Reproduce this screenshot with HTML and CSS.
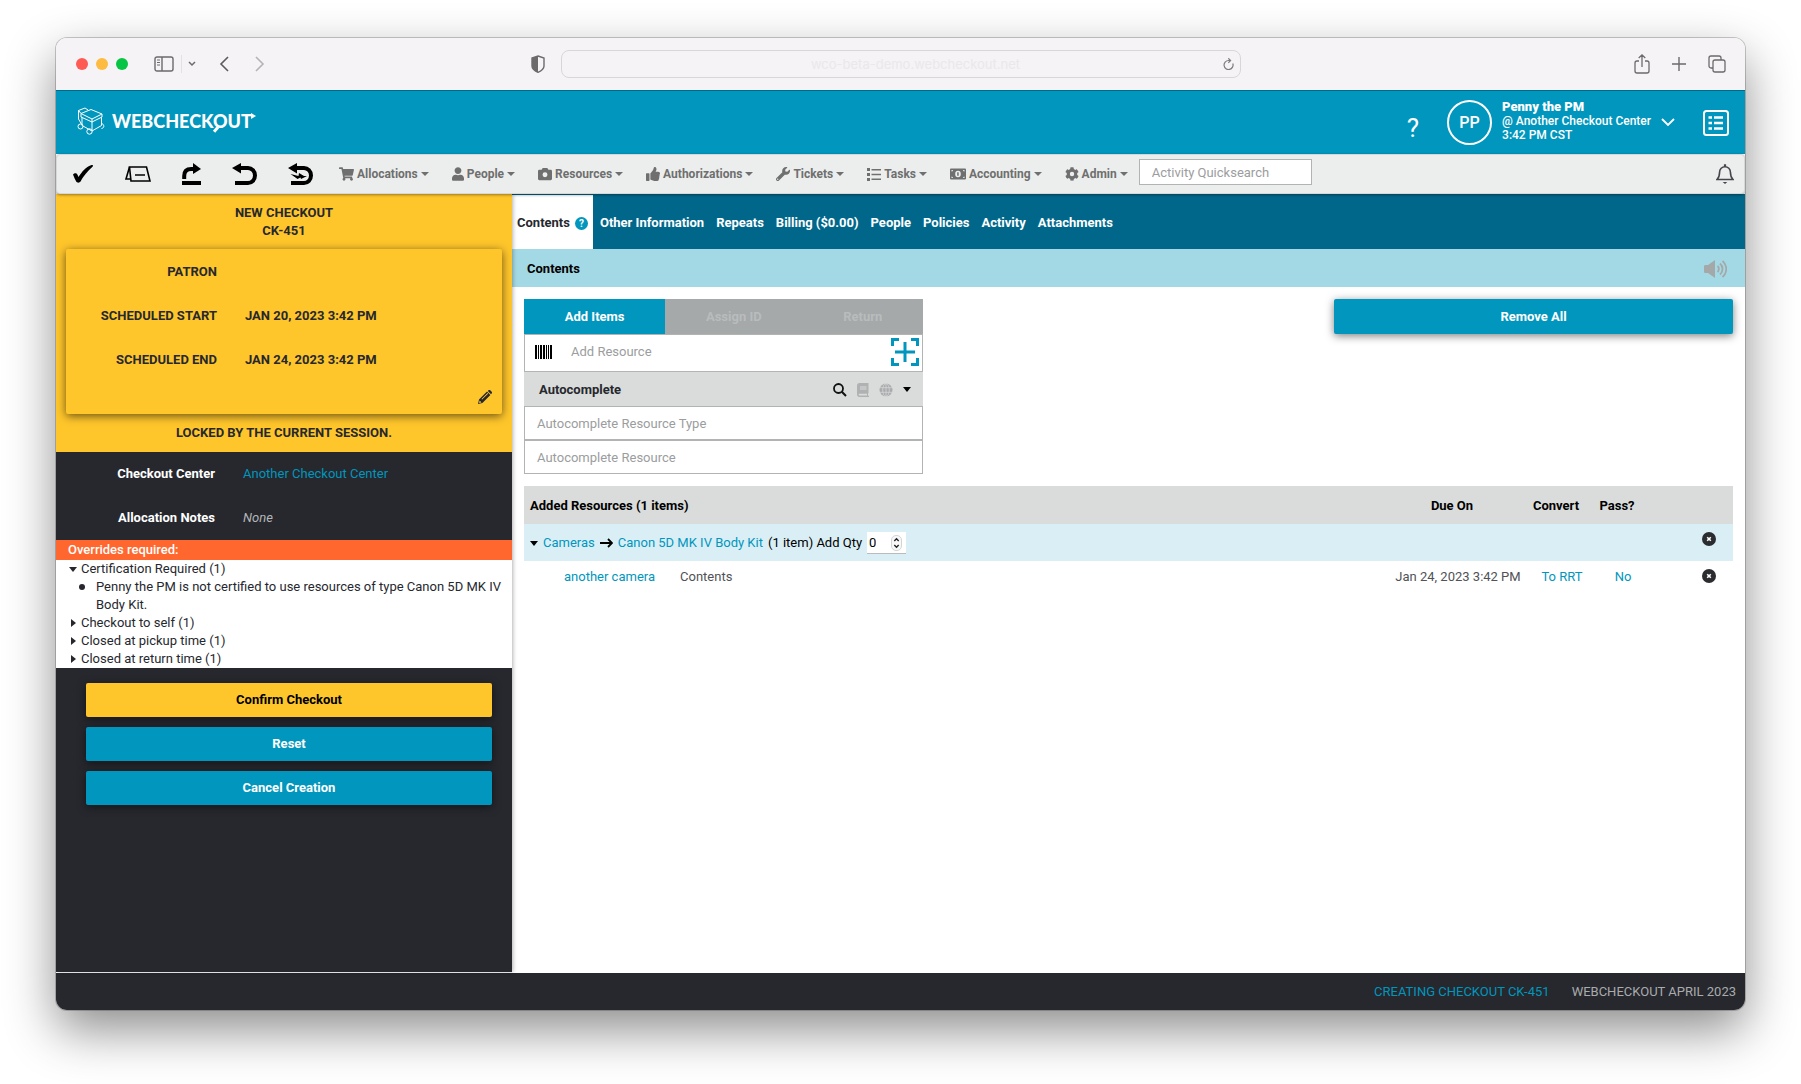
FILE: index.html
```html
<!DOCTYPE html>
<html lang="en">
<head>
    <meta charset="UTF-8">
    <meta name="viewport" content="width=device-width, initial-scale=1.0">
    <title>WebCheckout - New Checkout CK-451</title>
    <link rel="stylesheet" href="styles.css">
</head>
<body>
<div class="window">

    <!-- browser toolbar -->
    <div class="browser-bar">
        <div class="browser-left">
            <span class="light red"></span>
            <span class="light yellow"></span>
            <span class="light green"></span>
            <button class="plain sidebar-btn" aria-label="Sidebar">
                <svg width="20" height="16" viewBox="0 0 20 16" fill="none" stroke="#6c6a6b" stroke-width="1.4"><rect x="1" y="1" width="18" height="14" rx="2"/><path d="M8 1v14"/><path d="M3 4h3M3 6.5h3M3 9h3" stroke-width="1"/></svg>
            </button>
            <span class="divider"></span>
            <button class="plain tabs-btn" aria-label="Tab groups">
                <svg width="8" height="6" viewBox="0 0 8 6" fill="none" stroke="#6c6a6b" stroke-width="1.5"><path d="M1 1l3 3 3-3"/></svg>
            </button>
            <button class="plain back-btn" aria-label="Back">
                <svg width="10" height="16" viewBox="0 0 10 16" fill="none" stroke="#5c5a5b" stroke-width="1.6"><path d="M9 1L2 8l7 7"/></svg>
            </button>
            <button class="plain" aria-label="Forward">
                <svg width="10" height="16" viewBox="0 0 10 16" fill="none" stroke="#b5b3b4" stroke-width="1.6"><path d="M1 1l7 7-7 7"/></svg>
            </button>
        </div>
        <div class="browser-center">
            <svg width="14" height="18" viewBox="0 0 14 18"><path d="M7 1l6 2v8c0 3-3 5-6 6.300-3-1.300-6-3.300-6-6.300V3z" fill="none" stroke="#6c6a6b" stroke-width="1.400"/><path d="M7 1L1 3v8c0 3 3 5 6 6.300z" fill="#6c6a6b"/></svg>
            <div class="url">
                <input type="text" class="url-input" aria-label="Address" value="wco-beta-demo.webcheckout.net" readonly>
                <button class="plain" aria-label="Reload">
                    <svg width="11" height="12" viewBox="0 0 11 12" fill="none" stroke="#7d7b7c" stroke-width="1.200"><path d="M9.800 5.500A4.500 4.500 0 1 1 5.500 2.500h2M5.300.3l2.300 2.200-2.300 2.300"/></svg>
                </button>
            </div>
        </div>
        <div class="browser-right">
            <button class="plain" aria-label="Share">
                <svg width="16" height="20" viewBox="0 0 16 20" fill="none" stroke="#6c6a6b" stroke-width="1.300"><path d="M5 7H3a2 2 0 0 0-2 2v8a2 2 0 0 0 2 2h10a2 2 0 0 0 2-2V9a2 2 0 0 0-2-2h-2M8 13V1M4.700 4L8 .9 11.300 4"/></svg>
            </button>
            <button class="plain" aria-label="New tab">
                <svg width="14" height="14" viewBox="0 0 14 14" stroke="#6c6a6b" stroke-width="1.400"><path d="M7 0v14M0 7h14"/></svg>
            </button>
            <button class="plain" aria-label="Show tabs">
                <svg width="18" height="18" viewBox="0 0 18 18" fill="none" stroke="#6c6a6b" stroke-width="1.300"><rect x="5" y="5" width="12" height="12" rx="2"/><path d="M5 13H3a2 2 0 0 1-2-2V3a2 2 0 0 1 2-2h8a2 2 0 0 1 2 2v2"/></svg>
            </button>
        </div>
    </div>

    <!-- app header -->
    <header class="header">
        <a class="logo" href="#">
            <svg width="28" height="28" viewBox="0 0 28 28" fill="none" stroke="#fff" stroke-width="1" stroke-linejoin="round"><path d="M4 6.500l10-4 11 4.500-10 5zM4 6.500v3.500l11 5 10-5V7M5 10.500v8l10 5.500V15M24.500 10.500v8L15 24M15 12v3M1.500 12V3.500L8 1l3 2M1.500 3.500l2.500 3M1.500 12L5 18"/><circle cx="3.500" cy="19.500" r="2.500"/><circle cx="12.500" cy="24.500" r="2.700"/><path d="M25 16.500c2.500 1.500 2.500 4.500-.5 5"/></svg>
            <span class="logo-text">WEBCHECK<span class="logo-o">O</span>U<span class="logo-t">T</span></span>
        </a>
        <div class="header-right">
            <a class="help" href="#">?</a>
            <button class="plain account">
                <span class="avatar">PP</span>
                <span class="account-text">
                    <strong>Penny the PM</strong>
                    <span>@ Another Checkout Center</span>
                    <span>3:42 PM CST</span>
                </span>
                <svg width="14" height="9" viewBox="0 0 14 9" fill="none" stroke="#fff" stroke-width="1.800"><path d="M1 1l6 6 6-6"/></svg>
            </button>
            <button class="plain" aria-label="Work list">
                <svg width="26" height="26" viewBox="0 0 26 26" fill="none" stroke="#fff" stroke-width="2"><rect x="1" y="1" width="24" height="24" rx="2.500"/><path d="M11 7.500h9M11 13h9M11 18.500h9M5.500 7.500h3.500M5.500 13h3.500M5.500 18.500h3.500" stroke-width="2.600"/></svg>
            </button>
        </div>
    </header>

    <!-- menu bar -->
    <nav class="menubar">
        <div class="tools">
            <button class="plain" aria-label="Confirm">
                <svg width="22" height="20" viewBox="0 0 22 20"><path d="M1 10.500c1.500-2 4-1.700 4.500.2l1 2.300C10 7.500 14 3 19 1.200c2-.6 2.800.3 1.500 1.500C15.500 7 11 12.500 8.500 17.500c-1 1.600-3.500 1.500-4.300 0C3 15.500 2 13 1 10.500z"/></svg>
            </button>
            <button class="plain" aria-label="Ticket">
                <svg width="26" height="16" viewBox="0 0 26 16" fill="none" stroke="#000" stroke-width="1.600"><path d="M4.500 1h17l3.500 14H6z"/><path d="M4.500 1L1 13h4.500" /><path d="M10 9h10"/></svg>
            </button>
            <button class="plain" aria-label="Forward to">
                <svg width="19" height="22" viewBox="0 0 19 22"><path d="M0 18h19v4H0z"/><path d="M2.200 16v-3c0-4.500 2-7 7-7H12" fill="none" stroke="#000" stroke-width="4"/><path d="M11 0l8 6-8 5z"/></svg>
            </button>
            <button class="plain" aria-label="Undo">
                <svg width="25" height="22" viewBox="0 0 25 22"><path d="M6 5h10a7 7.500 0 0 1 0 15H3" fill="none" stroke="#000" stroke-width="4"/><path d="M9 0L0 5l9 5.500z"/></svg>
            </button>
            <button class="plain" aria-label="Quick return">
                <svg width="25" height="22" viewBox="0 0 25 22"><path d="M6 5h10a7 7.500 0 0 1 0 15H3" fill="none" stroke="#000" stroke-width="4"/><path d="M9 0L0 5l9 5.500zM2.500 11l8 2 .5-3 5 3h3l-6 3-.5-1.500-3 1.500z"/></svg>
            </button>
        </div>
        <div class="menus">
            <button class="plain menu"><svg width="15" height="14" viewBox="0 0 576 512"><path d="M528 301l47-208c4-15-8-29-23-29H159l-9-45C148 8 138 0 127 0H24C11 0 0 11 0 24v16c0 13 11 24 24 24h70l70 343c-17 10-28 28-28 49 0 31 25 56 56 56s56-25 56-56c0-16-6-30-17-40h210c-11 10-17 24-17 40 0 31 25 56 56 56s56-25 56-56c0-22-13-41-32-50l6-25c3-15-8-29-24-29H218l-6-32h293c11 0 21-8 23-19z"/></svg>Allocations<i class="caret"></i></button>
            <button class="plain menu"><svg width="12" height="14" viewBox="0 0 448 512"><path d="M224 256c71 0 128-57 128-128S295 0 224 0 96 57 96 128s57 128 128 128zm90 32h-17c-22 10-47 16-73 16s-51-6-73-16h-17C60 288 0 348 0 422v42c0 27 22 48 48 48h352c27 0 48-21 48-48v-42c0-74-60-134-134-134z"/></svg>People<i class="caret"></i></button>
            <button class="plain menu"><svg width="14" height="14" viewBox="0 0 512 512"><path fill-rule="evenodd" d="M512 144v288c0 27-21 48-48 48H48c-27 0-48-21-48-48V144c0-27 21-48 48-48h88l12-33c7-19 25-31 45-31h126c20 0 38 12 45 31l12 33h88c27 0 48 21 48 48zM346 284a90 90 0 1 0-180 0 90 90 0 1 0 180 0z"/></svg>Resources<i class="caret"></i></button>
            <button class="plain menu"><svg width="14" height="14" viewBox="0 0 512 512"><path d="M104 224H24c-13 0-24 11-24 24v240c0 13 11 24 24 24h80c13 0 24-11 24-24V248c0-13-11-24-24-24zM384 81c0 43-26 67-33 95h101c34 0 60 28 60 58 0 18-8 37-20 49 10 24 8 57-9 80 8 26 0 58-17 75 5 17 3 32-6 44-20 30-70 30-113 30-51 0-91-18-123-32-16-7-36-16-52-16-7 0-12-5-12-12V238c0-3 1-6 4-8 39-39 56-81 89-113 14-15 20-38 25-59C283 39 292 0 312 0c24 0 72 8 72 81z"/></svg>Authorizations<i class="caret"></i></button>
            <button class="plain menu"><svg width="14" height="14" viewBox="0 0 512 512"><path fill-rule="evenodd" d="M508 109c-3-9-14-12-20-5l-75 74-68-11-11-68 74-75c7-6 4-17-5-20-48-11-100 1-137 38-39 40-50 97-34 147L19 403c-25 25-25 65 0 90s65 25 90 0l213-213c51 17 108 6 148-34 37-37 50-90 38-137zM64 472a24 24 0 1 1 0-48 24 24 0 0 1 0 48z"/></svg>Tickets<i class="caret"></i></button>
            <button class="plain menu"><svg width="14" height="14" viewBox="0 0 14 14"><path d="M0 1h3v3H0zM0 6h3v3H0zM0 11h3v3H0zM4.500 2H14v1.500H4.500zM4.500 6.700H14v1.500H4.500zM4.500 11.500H14V13H4.500z"/></svg>Tasks<i class="caret"></i></button>
            <button class="plain menu"><svg width="16" height="14" viewBox="0 0 16 14"><path fill-rule="evenodd" d="M1 1.500h14a1 1 0 0 1 1 1v9a1 1 0 0 1-1 1H1a1 1 0 0 1-1-1v-9a1 1 0 0 1 1-1zM1.500 3v1.500A1.500 1.500 0 0 0 3 3zM13 3a1.500 1.500 0 0 0 1.500 1.500V3zM1.500 9.500V11H3a1.500 1.500 0 0 0-1.500-1.500zM14.500 9.500A1.500 1.500 0 0 0 13 11h1.500zM8 3.700a2.800 3.300 0 1 0 0 6.600 2.800 3.300 0 0 0 0-6.600z"/><path d="M7.200 5.200h1.500v3.600H7.200z"/></svg>Accounting<i class="caret"></i></button>
            <button class="plain menu"><svg width="14" height="14" viewBox="0 0 512 512"><path fill-rule="evenodd" d="M487 316l-42-25c4-23 4-47 0-70l42-25c5-3 8-8 6-14-11-35-30-68-55-94-4-5-10-6-15-3l-42 25c-18-15-39-27-61-35V26c0-6-4-11-9-12-37-8-75-8-110 0-5 1-9 6-9 12v49c-22 8-43 20-61 35L89 86c-5-3-11-2-15 2-25 27-44 59-55 94-2 6 1 11 6 14l42 25c-4 23-4 47 0 70l-42 25c-5 3-8 8-6 14 11 35 30 68 55 94 4 5 10 6 15 3l42-25c18 15 39 27 61 35v49c0 6 4 11 9 12 37 8 75 8 110 0 5-1 9-6 9-12v-49c22-8 43-20 61-35l42 25c5 3 11 2 15-3 25-26 44-59 55-94 2-6-1-11-6-14zM256 336a80 80 0 1 1 0-160 80 80 0 0 1 0 160z"/></svg>Admin<i class="caret"></i></button>
        </div>
        <input type="text" class="quicksearch" aria-label="Activity Quicksearch" placeholder="Activity Quicksearch">
        <button class="plain bell" aria-label="Notifications">
            <svg width="18" height="20" viewBox="0 0 18 20" fill="none" stroke="#44464b" stroke-width="1.600"><path d="M1 15.500h16c-2-2-2.600-4-2.600-7.500C14.400 5 12 2.800 9 2.800S3.600 5 3.600 8c0 3.500-.6 5.500-2.600 7.500z"/><path d="M9 .3v2.500" stroke-width="2.200"/><path d="M6.700 18h4.600L9 20z" fill="#44464b" stroke="none"/></svg>
        </button>
    </nav>

    <div class="body">
        <aside class="sidebar">
            <section class="checkout">
                <h1 class="checkout-title">NEW CHECKOUT<br>CK-451</h1>
                <div class="checkout-card">
                    <dl class="fields">
                        <dt>PATRON</dt><dd></dd>
                        <dt>SCHEDULED START</dt><dd>JAN 20, 2023 3:42 PM</dd>
                        <dt>SCHEDULED END</dt><dd>JAN 24, 2023 3:42 PM</dd>
                    </dl>
                    <button class="plain edit" aria-label="Edit">
                        <svg width="14" height="14" viewBox="0 0 14 14" fill="#26282e"><path fill-rule="evenodd" d="M0 14l1-4.500L9 1.600 12.400 5l-8 8zM1.600 10.500l-.5 2.400 2.400-.5zM3.500 9l6-5.900.6.6L4.100 9.600zM9.800 1l1-.9c.5-.2 1-.1 1.400.2l1.500 1.500c.4.500.4 1 .1 1.400l-.8 1z"/></svg>
                    </button>
                </div>
                <p class="locked">LOCKED BY THE CURRENT SESSION.</p>
            </section>

            <dl class="fields dark-fields">
                <dt>Checkout Center</dt><dd><a href="#">Another Checkout Center</a></dd>
                <dt>Allocation Notes</dt><dd><em>None</em></dd>
            </dl>

            <section class="overrides">
                <h2 class="overrides-title">Overrides required:</h2>
                <details open>
                    <summary>Certification Required (1)</summary>
                    <ul>
                        <li>Penny the PM is not certified to use resources of type Canon 5D MK IV Body Kit.</li>
                    </ul>
                </details>
                <details><summary>Checkout to self (1)</summary></details>
                <details><summary>Closed at pickup time (1)</summary></details>
                <details><summary>Closed at return time (1)</summary></details>
            </section>

            <div class="actions">
                <button class="btn btn-yellow">Confirm Checkout</button>
                <button class="btn">Reset</button>
                <button class="btn">Cancel Creation</button>
            </div>
        </aside>

        <main class="main">
            <nav class="tabs">
                <a class="tab active" href="#">Contents <span class="tab-help">?</span></a>
                <a class="tab" href="#">Other Information</a>
                <a class="tab" href="#">Repeats</a>
                <a class="tab" href="#">Billing ($0.00)</a>
                <a class="tab" href="#">People</a>
                <a class="tab" href="#">Policies</a>
                <a class="tab" href="#">Activity</a>
                <a class="tab" href="#">Attachments</a>
            </nav>
            <div class="section-bar">
                <h2>Contents</h2>
                <button class="plain" aria-label="Sound">
                    <svg width="23" height="18" viewBox="0 0 23 18" fill="#a5a8a9"><path d="M0 6.500C0 5.500.6 5 1.500 5H4l7-5v18l-7-5H1.500C.6 13 0 12.500 0 11.500z"/><path d="M13.500 6c1.800 1.500 1.800 4.500 0 6M16 3.500c3.400 3 3.400 8 0 11M18.500 1c5 4.500 5 11.500 0 16" fill="none" stroke="#a5a8a9" stroke-width="1.800"/></svg>
                </button>
            </div>

            <div class="content">
                <div class="content-top">
                    <div class="add-panel">
                        <div class="panel-tabs">
                            <button class="plain panel-tab selected">Add Items</button>
                            <button class="plain panel-tab" disabled>Assign ID</button>
                            <button class="plain panel-tab" disabled>Return</button>
                        </div>
                        <div class="scan">
                            <svg width="17" height="14" viewBox="0 0 17 14"><path d="M0 0h2v14H0zM3 0h1v14H3zM5 0h2v14H5zM8 0h2v14H8zM11 0h1v14h-1zM13 0h1v14h-1zM15 0h2v14h-2z"/></svg>
                            <input type="text" aria-label="Add Resource" placeholder="Add Resource">
                            <button class="plain" aria-label="Add">
                                <svg width="28" height="28" viewBox="0 0 28 28" fill="none" stroke="#0096bd" stroke-width="3"><path d="M1.500 8V1.500H8M20 1.500h6.500V8M26.500 20v6.500H20M8 26.500H1.500V20"/><path d="M14 4v20M4 14h20"/></svg>
                            </button>
                        </div>
                        <div class="auto-bar">
                            <h3>Autocomplete</h3>
                            <button class="plain" aria-label="Search"><svg width="14" height="14" viewBox="0 0 14 14" fill="none" stroke="#111" stroke-width="1.800"><circle cx="5.500" cy="5.500" r="4.500"/><path d="M8.800 8.800L13 13" stroke-width="2"/></svg></button>
                            <button class="plain" aria-label="Catalog"><svg width="12" height="14" viewBox="0 0 12 14" fill="#afb1b2"><path fill-rule="evenodd" d="M2.500 0H11.500v10l-.5.500v2l1 .5v1H2.500C1 14 0 13 0 11.500v-9C0 1 1 0 2.500 0zM3 3.500v1h6.500v-1zM3 5.500v1h6.500v-1zM2.500 10.800c-1.200 0-1.200 1.600 0 1.600h7.500v-1.600z"/></svg></button>
                            <button class="plain" aria-label="Global"><svg width="14" height="14" viewBox="0 0 14 14"><circle cx="7" cy="7" r="6.500" fill="#a9abac"/><path d="M0 4.700h14M0 9.300h14M7 0v14" stroke="#dadcdb" stroke-width=".7" fill="none"/><ellipse cx="7" cy="7" rx="3.300" ry="6.500" stroke="#dadcdb" stroke-width=".7" fill="none"/></svg></button>
                            <button class="plain" aria-label="Toggle autocomplete"><i class="arrow-down"></i></button>
                        </div>
                        <input type="text" class="auto-input" aria-label="Autocomplete Resource Type" placeholder="Autocomplete Resource Type">
                        <input type="text" class="auto-input" aria-label="Autocomplete Resource" placeholder="Autocomplete Resource">
                    </div>
                    <button class="btn remove-all">Remove All</button>
                </div>

                <table class="resources">
                    <colgroup>
                        <col class="col-name"><col><col class="col-due"><col class="col-convert"><col class="col-pass"><col class="col-remove">
                    </colgroup>
                    <thead>
                        <tr>
                            <th colspan="2" class="first">Added Resources (1 items)</th>
                            <th>Due On</th>
                            <th>Convert</th>
                            <th>Pass?</th>
                            <th></th>
                        </tr>
                    </thead>
                    <tbody>
                        <tr class="group">
                            <td colspan="5" class="first">
                                <div class="group-line">
                                    <i class="arrow-down"></i>
                                    <a href="#">Cameras</a>
                                    <svg width="13" height="10" viewBox="0 0 13 10" fill="none" stroke="#000" stroke-width="1.800"><path d="M0 5h12M8 1l4 4-4 4"/></svg>
                                    <a href="#">Canon 5D MK IV Body Kit</a>
                                    <label for="qty">(1 item) Add Qty</label>
                                    <span class="qty">
                                        <input type="number" id="qty" value="0">
                                        <svg width="11" height="16" viewBox="0 0 11 16"><rect x=".5" y=".5" width="10" height="15" rx="4.500" fill="#f8f8f8" stroke="#d4d4d4"/><path d="M3.300 6l2.200-2.200L7.700 6M3.300 10l2.200 2.200L7.700 10" fill="none" stroke="#222" stroke-width="1.400"/></svg>
                                    </span>
                                </div>
                            </td>
                            <td class="remove"><button class="plain" aria-label="Remove group"><svg width="14" height="14" viewBox="0 0 14 14"><circle cx="7" cy="7" r="7" fill="#2b2c2f"/><path d="M5.200 5.200l3.600 3.600M8.800 5.200L5.200 8.800" stroke="#fff" stroke-width="1.600"/></svg></button></td>
                        </tr>
                        <tr class="item">
                            <td class="indent"><a href="#">another camera</a></td>
                            <td>Contents</td>
                            <td class="center">Jan 24, 2023 3:42 PM</td>
                            <td class="center"><a href="#">To RRT</a></td>
                            <td class="center"><a href="#">No</a></td>
                            <td class="remove"><button class="plain" aria-label="Remove item"><svg width="14" height="14" viewBox="0 0 14 14"><circle cx="7" cy="7" r="7" fill="#2b2c2f"/><path d="M5.200 5.200l3.600 3.600M8.800 5.200L5.200 8.800" stroke="#fff" stroke-width="1.600"/></svg></button></td>
                        </tr>
                    </tbody>
                </table>
            </div>
        </main>
    </div>

    <footer class="footer">
        <a href="#">CREATING CHECKOUT CK-451</a>
        <span>WEBCHECKOUT APRIL 2023</span>
    </footer>
</div>
</body>
</html>
```
FILE: styles.css
```css
* {
    box-sizing: border-box;
}
body {
    margin: 0;
    padding: 38px 56px 74px;
    min-height: 100vh;
    display: flex;
    background-color: #fff;
    font-family: Roboto, "Liberation Sans", sans-serif;
    font-size: 13px;
    line-height: 18px;
    color: #26282e;
}
h1, h2, h3, p, dl, dd, ul {
    margin: 0;
    padding: 0;
    font-size: 13px;
    line-height: 18px;
}
a {
    color: #0096bd;
    text-decoration: none;
}
svg {
    display: block;
    flex: none;
}
input {
    font: inherit;
    color: inherit;
    min-width: 0;
}
input::placeholder {
    color: #9b9d9e;
    opacity: 1;
}
.plain {
    padding: 0;
    border: 0;
    background: none;
    font: inherit;
    color: inherit;
    cursor: pointer;
}
.window {
    flex: 1;
    min-width: 0;
    display: flex;
    flex-direction: column;
    border-radius: 11px;
    overflow: hidden;
    background-color: #fff;
    box-shadow: 0 0 0 1px rgba(0, 0, 0, 0.2), 0 20px 50px rgba(0, 0, 0, 0.45);
}

/* browser toolbar */
.browser-bar {
    display: flex;
    align-items: center;
    justify-content: space-between;
    height: 52px;
    padding: 0 19px 0 20px;
    background-color: #f5f3f5;
}
.browser-left, .browser-right {
    flex: 1;
    display: flex;
    align-items: center;
}
.browser-right {
    justify-content: flex-end;
    gap: 22px;
}
.light {
    width: 12px;
    height: 12px;
    margin-right: 8px;
    border-radius: 50%;
}
.red { background-color: #ff5b55; }
.yellow { background-color: #fdbc40; }
.green { background-color: #06c544; }
.sidebar-btn { margin-left: 18px; }
.divider {
    width: 1px;
    height: 18px;
    margin: 0 6px 0 7px;
    background-color: #e3e1e3;
}
.back-btn { margin: 0 26px 0 23px; }
.browser-center {
    flex: 0 0 43%;
    display: flex;
    align-items: center;
    gap: 16px;
    margin-right: 30px;
}
.url {
    flex: 1;
    height: 28px;
    display: flex;
    align-items: center;
    padding: 0 6px 0 46px;
    border: 1px solid #d8d6d8;
    border-radius: 8px;
}
.url-input {
    flex: 1;
    border: 0;
    background: none;
    text-align: center;
    font-family: Inter, sans-serif;
    color: #eae8ea;
}

/* header */
.header {
    display: flex;
    align-items: center;
    justify-content: space-between;
    height: 64px;
    padding: 0 16px 0 21px;
    border-top: 1px solid #00698c;
    background-color: #0096bd;
    color: #fff;
}
.logo {
    display: flex;
    align-items: center;
    gap: 7px;
    padding-bottom: 3px;
    color: #fff;
}
.logo-text {
    font-family: Lato, sans-serif;
    font-size: 18px;
    font-weight: 900;
}
.logo-o, .logo-t {
    position: relative;
}
/* tail of the O and arrow tip of the T */
.logo-o::after {
    content: "";
    position: absolute;
    left: 0;
    bottom: 1px;
    width: 6px;
    height: 3px;
    background-color: #fff;
    transform: rotate(-50deg);
}
.logo-t::after {
    content: "";
    position: absolute;
    right: -4px;
    top: 3px;
    border: 3px solid transparent;
    border-left: 5px solid #fff;
    border-right: 0;
}
.header-right {
    display: flex;
    align-items: center;
    gap: 28px;
}
.help {
    padding-top: 10px;
    font-size: 26px;
    color: #fff;
}
.account {
    display: flex;
    align-items: center;
    gap: 10px;
    text-align: left;
    font-weight: 500;
}
.avatar {
    width: 45px;
    height: 45px;
    display: flex;
    align-items: center;
    justify-content: center;
    border: 2px solid #fff;
    border-radius: 50%;
    font-size: 16px;
}
.account-text {
    display: flex;
    flex-direction: column;
    padding-bottom: 3px;
    font-size: 12px;
    line-height: 14px;
}
.account-text strong {
    font-size: 13px;
    font-weight: 900;
}

/* menu bar */
.menubar {
    position: relative;
    z-index: 2;
    display: flex;
    align-items: center;
    height: 40px;
    padding: 0 10px 0 15px;
    border: 1px solid #d5d8d7;
    border-radius: 4px;
    background-color: #eceeed;
    box-shadow: 0 1px 3px rgba(0, 0, 0, 0.4);
}
.tools {
    display: flex;
    align-items: center;
    gap: 31px;
}
.menus {
    display: flex;
    gap: 23px;
    margin: 0 11px 0 26px;
}
.menu {
    display: flex;
    align-items: center;
    gap: 3px;
    font-weight: 700;
    font-size: 12px;
    color: #6f6f6f;
    fill: #6f6f6f;
}
.caret {
    border: 4px solid transparent;
    border-top-color: #6f6f6f;
    border-bottom: 0;
}
.quicksearch {
    width: 173px;
    height: 26px;
    margin-bottom: 4px;
    padding: 0 12px;
    border: 1px solid #b1b4b3;
}
.bell {
    margin-left: auto;
}

/* sidebar */
.body {
    flex: 1;
    display: flex;
    border-bottom: 1px solid #fff;
}
.sidebar {
    position: relative;
    z-index: 1;
    width: 27%;
    background-color: #26282e;
    box-shadow: 1px 0 4px rgba(0, 0, 0, 0.3);
}
.checkout {
    padding: 10px;
    background-color: #ffc62b;
    font-weight: 700;
}
.checkout-title {
    text-align: center;
}
.checkout-card {
    margin: 9px 0 10px;
    padding: 1px 0 10px;
    border-radius: 2px;
    box-shadow: 0 2px 10px rgba(0, 0, 0, 0.6);
}
.locked {
    text-align: center;
}
.fields {
    display: grid;
    grid-template-columns: 151px 1fr;
    grid-auto-rows: 44px;
    column-gap: 28px;
    align-items: center;
}
.fields dt {
    text-align: right;
}
.edit {
    display: block;
    margin: 8px 10px 0 auto;
}
.dark-fields {
    padding: 0 10px;
    grid-template-columns: 149px 1fr;
}
.dark-fields dt {
    color: #fff;
    font-weight: 700;
}
.dark-fields em {
    color: #b4b5b7;
}
.overrides {
    background-color: #fff;
}
.overrides-title {
    padding: 1px 12px;
    background-color: #ff672e;
    color: #fff;
    font-weight: 500;
}
.overrides summary {
    display: flex;
    align-items: center;
    list-style: none;
    padding-left: 15px;
    cursor: pointer;
}
.overrides summary::before {
    content: "";
    margin-right: 5px;
    border: 4px solid transparent;
    border-left: 5px solid #26282e;
    border-right: 0;
}
.overrides details[open] summary {
    padding-left: 13px;
}
.overrides details[open] summary::before {
    margin-right: 4px;
    border: 4px solid transparent;
    border-top: 5px solid #26282e;
    border-bottom: 0;
}
.overrides li {
    display: flex;
    padding: 0 4px 0 23px;
}
.overrides li::before {
    content: "";
    flex: none;
    width: 6px;
    height: 6px;
    margin: 6px 11px 0 0;
    border-radius: 50%;
    background-color: #26282e;
}
.actions {
    display: flex;
    flex-direction: column;
    gap: 10px;
    padding: 15px 20px 15px 30px;
}
.btn {
    height: 34px;
    border: 0;
    border-radius: 2px;
    background-color: #0096bd;
    box-shadow: 0 2px 8px rgba(0, 0, 0, 0.5);
    color: #fff;
    font: inherit;
    font-weight: 700;
    cursor: pointer;
}
.btn-yellow {
    background-color: #ffc62b;
    color: #000;
}

/* main */
.main {
    flex: 1;
    min-width: 0;
}
.tabs {
    display: flex;
    height: 55px;
    border-top: 1px solid #00678a;
    background-color: #00678a;
}
.tab {
    display: flex;
    align-items: center;
    padding: 2px 6px 0;
    color: #fff;
    font-weight: 700;
}
.tab.active {
    gap: 5px;
    margin-right: 1px;
    padding: 2px 5px 0;
    background-color: #fff;
    color: #26282e;
}
.tab-help {
    width: 13px;
    height: 13px;
    border-radius: 50%;
    background-color: #0096bd;
    color: #fff;
    font-size: 10px;
    line-height: 13px;
    text-align: center;
}
.section-bar {
    display: flex;
    align-items: center;
    justify-content: space-between;
    height: 38px;
    padding: 1px 18px 0 15px;
    background-color: #a3d9e4;
    color: #000;
}
.content {
    padding: 12px;
}
.content-top {
    display: flex;
    justify-content: space-between;
    align-items: flex-start;
    margin-bottom: 12px;
}
.add-panel {
    width: 33%;
}
.panel-tabs {
    display: flex;
    height: 35px;
    background-color: #a5a9aa;
}
.panel-tab {
    flex: 1 0 auto;
    padding: 0 40px;
    color: #b9bcbd;
    font-weight: 700;
}
.panel-tab.selected {
    background-color: #0096bd;
    color: #fff;
}
.scan {
    display: flex;
    align-items: center;
    height: 38px;
    padding: 0 3px 2px 10px;
    border: 1px solid #b1b4b3;
}
.scan input {
    flex: 1;
    margin-left: 17px;
    border: 0;
}
.auto-bar {
    display: flex;
    align-items: center;
    gap: 10px;
    height: 34px;
    padding: 1px 12px 0 15px;
    background-color: #dadcdb;
}
.auto-bar h3 {
    margin-right: auto;
}
.auto-input {
    display: block;
    width: 100%;
    height: 34px;
    padding: 0 12px;
    border: 1px solid #b1b4b3;
}
.arrow-down {
    display: block;
    border: 4px solid transparent;
    border-top: 5px solid #000;
    border-bottom: 0;
}
.remove-all {
    width: 33%;
    height: 35px;
}
.resources {
    width: 100%;
    table-layout: fixed;
    border-collapse: collapse;
}
.resources th {
    height: 38px;
    padding: 2px 12px 0 0;
    background-color: #dadcdb;
    color: #000;
    font-weight: 700;
}
.resources td {
    padding: 0;
    color: #505256;
}
.resources .first {
    padding-left: 6px;
    text-align: left;
}
.col-name { width: 156px; }
.col-due { width: 136px; }
.col-convert { width: 72px; }
.col-pass { width: 50px; }
.col-remove { width: 85px; }
.group td {
    height: 37px;
    padding-top: 1px;
    background-color: #daeff5;
    color: #000;
}
.group-line {
    display: flex;
    align-items: center;
    gap: 5px;
}
.qty {
    display: flex;
    align-items: center;
    width: 39px;
    height: 22px;
    padding: 0 4px 0 2px;
    border-bottom: 1px solid #bbb;
    background-color: #fff;
}
.qty input {
    flex: 1;
    width: 0;
    padding: 0;
    border: 0;
    appearance: textfield;
}
.item td {
    height: 32px;
}
.resources .indent {
    padding-left: 40px;
}
.center {
    text-align: center;
}
.resources .remove {
    padding: 0 17px 2px 0;
}
.resources .group .remove {
    padding-bottom: 7px;
}
.remove button {
    display: block;
    margin-left: auto;
}

/* footer */
.footer {
    display: flex;
    align-items: center;
    justify-content: flex-end;
    gap: 22px;
    height: 37px;
    padding: 0 9px;
    background-color: #26282e;
    color: #a9abad;
}
```
